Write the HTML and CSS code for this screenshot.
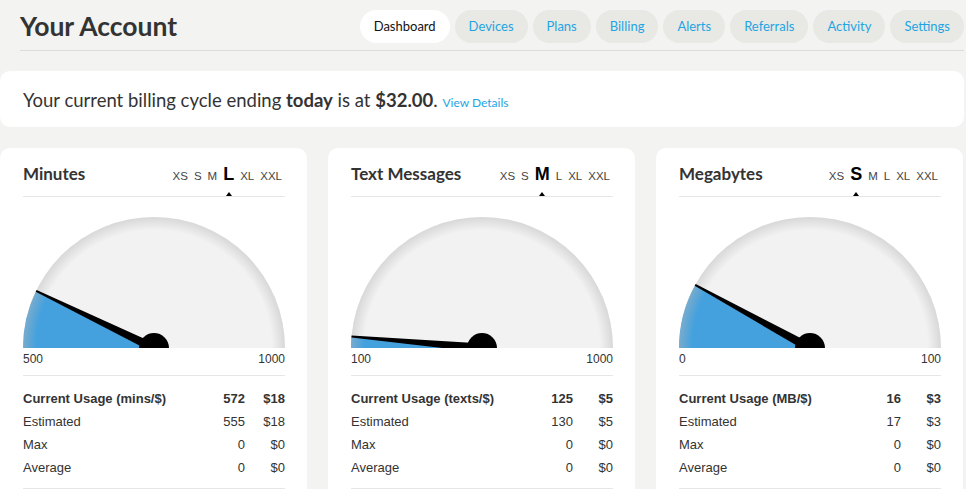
FILE: index.html
```html
<!DOCTYPE html>
<html>
<head>
<meta charset="utf-8">
<title>Your Account</title>
<link rel="stylesheet" href="styles.css">
</head>
<body>
<div class="page">
  <header class="topbar">
    <h1 class="title">Your Account</h1>
    <nav class="tabs">
      <a class="tab active">Dashboard</a>
      <a class="tab">Devices</a>
      <a class="tab">Plans</a>
      <a class="tab">Billing</a>
      <a class="tab">Alerts</a>
      <a class="tab">Referrals</a>
      <a class="tab">Activity</a>
      <a class="tab">Settings</a>
    </nav>
  </header>

  <section class="billing">
    <p>Your current billing cycle ending <b>today</b> is at <b>$32.00</b>. <a class="link">View Details</a></p>
  </section>

  <section class="cards">
    <article class="card">
      <div class="card-head">
        <h2>Minutes</h2>
        <ul class="sizes"><li>XS</li><li>S</li><li>M</li><li class="sel">L</li><li>XL</li><li>XXL</li></ul>
      </div>
      <svg class="gauge" viewBox="0 0 262 131" width="262" height="131">
        <defs>
          <radialGradient id="sh1" cx="131" cy="131" r="131" gradientUnits="userSpaceOnUse">
            <stop offset="0.9" stop-color="#b8b8b8" stop-opacity="0"/>
            <stop offset="1" stop-color="#b8b8b8" stop-opacity="0.45"/>
          </radialGradient>
        </defs>
        <path d="M0,131 A131,131 0 0 1 262,131 Z" fill="#f2f2f2"/>
        <path d="M131,131 L0,131 A131,131 0 0 1 13.15,73.78 Z" fill="#44a1de"/>
        <path d="M0,131 A131,131 0 0 1 262,131 Z" fill="url(#sh1)"/>
        <g transform="rotate(25.9 131 131)">
          <polygon points="131,126.5 0,130 0,132 131,135.5" fill="#000"/>
        </g>
        <circle cx="131" cy="131" r="15" fill="#000"/>
      </svg>
      <div class="scale"><span>500</span><span>1000</span></div>
      <div class="stats">
        <div class="row head"><span>Current Usage (mins/$)</span><span class="num">572</span><span class="num">$18</span></div>
        <div class="row"><span>Estimated</span><span class="num">555</span><span class="num">$18</span></div>
        <div class="row"><span>Max</span><span class="num">0</span><span class="num">$0</span></div>
        <div class="row"><span>Average</span><span class="num">0</span><span class="num">$0</span></div>
      </div>
    </article>

    <article class="card">
      <div class="card-head">
        <h2>Text Messages</h2>
        <ul class="sizes"><li>XS</li><li>S</li><li class="sel">M</li><li>L</li><li>XL</li><li>XXL</li></ul>
      </div>
      <svg class="gauge" viewBox="0 0 262 131" width="262" height="131">
        <defs>
          <radialGradient id="sh2" cx="131" cy="131" r="131" gradientUnits="userSpaceOnUse">
            <stop offset="0.9" stop-color="#b8b8b8" stop-opacity="0"/>
            <stop offset="1" stop-color="#b8b8b8" stop-opacity="0.45"/>
          </radialGradient>
        </defs>
        <path d="M0,131 A131,131 0 0 1 262,131 Z" fill="#f2f2f2"/>
        <path d="M131,131 L0,131 A131,131 0 0 1 0.5,119.6 Z" fill="#44a1de"/>
        <path d="M0,131 A131,131 0 0 1 262,131 Z" fill="url(#sh2)"/>
        <g transform="rotate(5 131 131)">
          <polygon points="131,126.5 0,130 0,132 131,135.5" fill="#000"/>
        </g>
        <circle cx="131" cy="131" r="15" fill="#000"/>
      </svg>
      <div class="scale"><span>100</span><span>1000</span></div>
      <div class="stats">
        <div class="row head"><span>Current Usage (texts/$)</span><span class="num">125</span><span class="num">$5</span></div>
        <div class="row"><span>Estimated</span><span class="num">130</span><span class="num">$5</span></div>
        <div class="row"><span>Max</span><span class="num">0</span><span class="num">$0</span></div>
        <div class="row"><span>Average</span><span class="num">0</span><span class="num">$0</span></div>
      </div>
    </article>

    <article class="card">
      <div class="card-head">
        <h2>Megabytes</h2>
        <ul class="sizes"><li>XS</li><li class="sel">S</li><li>M</li><li>L</li><li>XL</li><li>XXL</li></ul>
      </div>
      <svg class="gauge" viewBox="0 0 262 131" width="262" height="131">
        <defs>
          <radialGradient id="sh3" cx="131" cy="131" r="131" gradientUnits="userSpaceOnUse">
            <stop offset="0.9" stop-color="#b8b8b8" stop-opacity="0"/>
            <stop offset="1" stop-color="#b8b8b8" stop-opacity="0.45"/>
          </radialGradient>
        </defs>
        <path d="M0,131 A131,131 0 0 1 262,131 Z" fill="#f2f2f2"/>
        <path d="M131,131 L0,131 A131,131 0 0 1 16.2,67.9 Z" fill="#44a1de"/>
        <path d="M0,131 A131,131 0 0 1 262,131 Z" fill="url(#sh3)"/>
        <g transform="rotate(28.8 131 131)">
          <polygon points="131,126.5 0,130 0,132 131,135.5" fill="#000"/>
        </g>
        <circle cx="131" cy="131" r="15" fill="#000"/>
      </svg>
      <div class="scale"><span>0</span><span>100</span></div>
      <div class="stats">
        <div class="row head"><span>Current Usage (MB/$)</span><span class="num">16</span><span class="num">$3</span></div>
        <div class="row"><span>Estimated</span><span class="num">17</span><span class="num">$3</span></div>
        <div class="row"><span>Max</span><span class="num">0</span><span class="num">$0</span></div>
        <div class="row"><span>Average</span><span class="num">0</span><span class="num">$0</span></div>
      </div>
    </article>
  </section>
</div>
</body>
</html>
```

FILE: styles.css
```css
* { box-sizing: border-box; }

body {
  margin: 0;
  background: #f3f3f1;
  font-family: Lato, "Liberation Sans", sans-serif;
  color: #333;
}

.page {
  width: 964px;
}

.topbar {
  margin-left: 20px;
  display: flex;
  align-items: center;
  justify-content: space-between;
  padding: 10px 0 7px;
  border-bottom: 1px solid #dcdcda;
}

.title {
  margin: 0;
  font-size: 26.5px;
  font-weight: 700;
  line-height: 33px;
  color: #333;
}

.tabs {
  display: flex;
  gap: 5px;
}

.tab {
  display: block;
  height: 33px;
  line-height: 33px;
  padding: 0 14px;
  border-radius: 17px;
  background: #e8e8e4;
  color: #1ea5e3;
  font-size: 13px;
  text-decoration: none;
}

.tab.active {
  background: #fff;
  color: #111;
}

.billing {
  margin-top: 20px;
  height: 56px;
  background: #fff;
  border-radius: 10px;
  padding-left: 23px;
  display: flex;
  align-items: center;
  font-size: 18.5px;
  color: #333;
}

.billing p {
  margin: 0;
  padding-top: 2px;
}

.billing b {
  font-weight: 700;
}

.link {
  font-size: 12px;
  color: #1ea5e3;
}

.cards {
  margin-top: 21px;
  display: grid;
  grid-template-columns: repeat(3, 307px);
  column-gap: 21px;
}

.card {
  background: #fff;
  border-radius: 10px 10px 0 0;
  padding: 0 22px 20px 23px;
}

.card-head {
  height: 49px;
  padding-top: 16px;
  border-bottom: 1px solid #e6e6e6;
  display: flex;
  justify-content: space-between;
  align-items: baseline;
}

.card-head h2 {
  margin: 0;
  font-size: 17px;
  line-height: 20px;
  font-weight: 700;
  color: #333;
}

.sizes {
  list-style: none;
  margin: 0;
  padding: 0 3px 0 0;
  display: flex;
  align-items: baseline;
  gap: 6px;
  font-family: "Liberation Sans", Arial, sans-serif;
  font-size: 11.5px;
  color: #444;
}

.sizes .sel {
  position: relative;
  font-size: 18px;
  line-height: 20px;
  font-weight: 700;
  color: #000;
}

.sizes .sel::after {
  content: "";
  position: absolute;
  left: 50%;
  top: 28px;
  margin-left: -3px;
  border-left: 3px solid transparent;
  border-right: 3px solid transparent;
  border-bottom: 4px solid #000;
}

.gauge {
  display: block;
  margin-top: 20px;
}

.scale {
  display: flex;
  justify-content: space-between;
  padding: 4px 0 8px;
  font-family: "Liberation Sans", Arial, sans-serif;
  font-size: 12px;
  line-height: 15px;
  color: #333;
  border-bottom: 1px solid #e6e6e6;
}

.stats {
  padding: 11px 0 9px;
  border-bottom: 1px solid #e6e6e6;
  font-family: "Liberation Sans", Arial, sans-serif;
  font-size: 13px;
  color: #333;
}

.row {
  display: grid;
  grid-template-columns: 1fr 50px 40px;
  line-height: 23px;
}

.row.head {
  font-weight: 700;
}

.num {
  text-align: right;
}
```
